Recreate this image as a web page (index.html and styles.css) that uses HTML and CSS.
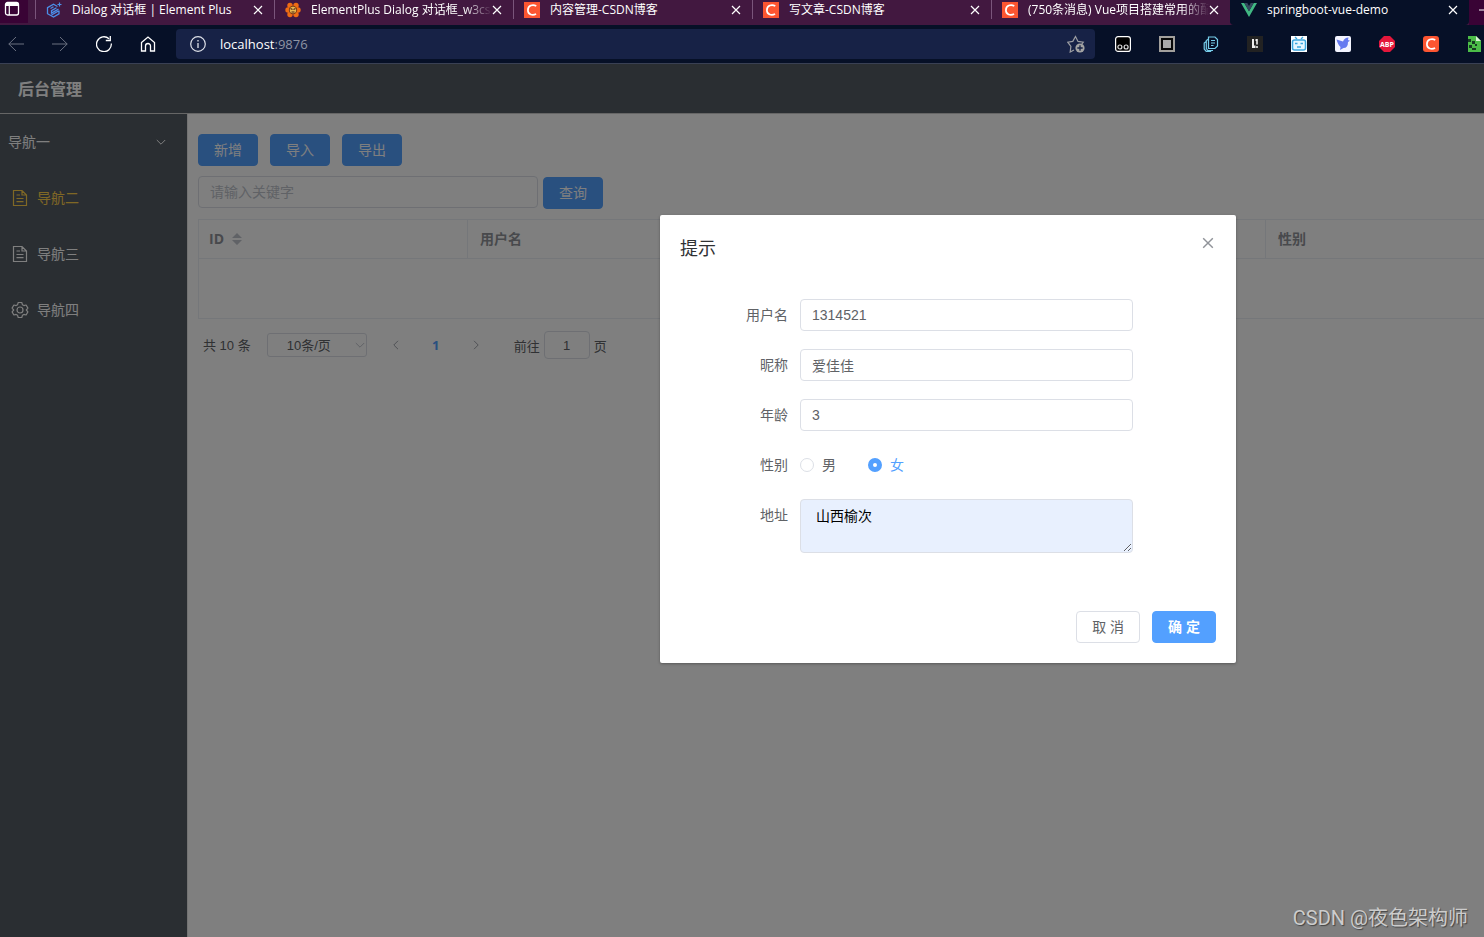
FILE: index.html
```html
<!DOCTYPE html>
<html lang="zh-CN">
<head>
<meta charset="utf-8">
<title>springboot-vue-demo</title>
<link rel="stylesheet" href="styles.css">
</head>
<body>
<svg class="defs" aria-hidden="true">
  <symbol id="x" viewBox="0 0 10 10"><path d="M1 1l8 8M9 1L1 9" fill="none" stroke="currentColor" stroke-width="1.200"/></symbol>
  <symbol id="csdn" viewBox="0 0 16 16"><rect width="16" height="16" fill="#fc5531"/><path d="M12.300 3.900C8.800 2.200 3.900 3.200 3.900 8.200c0 4.700 4.800 5.600 8.200 3.900" fill="none" stroke="#fff" stroke-width="1.700"/></symbol>
  <symbol id="down" viewBox="0 0 10 10"><path d="M.8 3L5 7.200 9.200 3" fill="none" stroke="currentColor"/></symbol>
  <symbol id="doc" viewBox="0 0 18 18"><path d="M2.500 1.500h8.500l4.500 4.500v10.500h-13zM11 1.500V6h4.500M5.500 6H9M5.500 9.500h7M5.500 12.700h7" fill="none" stroke="currentColor" stroke-width="1.200"/></symbol>
</svg>
<div class="browser">
  <div class="tabs">
    <button class="tab-menu" aria-label="标签页"><svg width="16" height="16" viewBox="0 0 16 16"><rect x="1.500" y="1.500" width="13" height="12.500" rx="2" fill="none" stroke="#fff" stroke-width="1.300"/><path d="M5.300 5v9" stroke="#fff" stroke-width="1.200"/><path d="M2 3.500h12" stroke="#fff" stroke-width="3"/></svg></button>
    <div class="tab"><svg class="fav" viewBox="0 0 16 16"><path d="M11.500 4.500L7.500 2.300 1.500 5.700v6l6 3.300 5.500-3.200V8.500M10.500 5.800l-5 2.900v2.400l7-4M7.500 4.800L4.500 6.500M5.500 13l7-4" fill="none" stroke="#4b8fe8" stroke-width="1.300"/><path d="M13.500 .5v4M11.500 2.500h4" stroke="#4b8fe8" stroke-width="1.200"/></svg><span class="tab-title">Dialog 对话框 | Element Plus</span><button class="tab-x" aria-label="关闭"><svg><use href="#x"/></svg></button></div>
    <div class="tab"><svg class="fav" viewBox="0 0 16 16"><g fill="#ef6c13"><circle cx="5" cy="3.500" r="2.700"/><circle cx="11" cy="3.500" r="2.700"/><circle cx="3" cy="8" r="2.700"/><circle cx="13" cy="8" r="2.700"/><circle cx="5" cy="12.500" r="2.700"/><circle cx="11" cy="12.500" r="2.700"/></g><circle cx="8" cy="8" r="4.200" fill="#7a3a14"/><circle cx="8" cy="8" r="3.200" fill="#e8b84e"/><path d="M5.500 6.500l2 1M10.500 6.500l-2 1M6.500 10h3" stroke="#492019" stroke-width="1.200"/></svg><span class="tab-title fade">ElementPlus Dialog 对话框_w3cs</span><button class="tab-x" aria-label="关闭"><svg><use href="#x"/></svg></button></div>
    <div class="tab"><svg class="fav"><use href="#csdn"/></svg><span class="tab-title">内容管理-CSDN博客</span><button class="tab-x" aria-label="关闭"><svg><use href="#x"/></svg></button></div>
    <div class="tab"><svg class="fav"><use href="#csdn"/></svg><span class="tab-title">写文章-CSDN博客</span><button class="tab-x" aria-label="关闭"><svg><use href="#x"/></svg></button></div>
    <div class="tab"><svg class="fav"><use href="#csdn"/></svg><span class="tab-title fade">(750条消息) Vue项目搭建常用的配</span><button class="tab-x" aria-label="关闭"><svg><use href="#x"/></svg></button></div>
    <div class="tab active"><svg class="fav" viewBox="0 0 16 16"><path d="M0 1h3.300L8 9.300 12.700 1H16L8 15z" fill="#41b883"/><path d="M3.300 1h3L8 4l1.700-3h3L8 9.300z" fill="#35495e"/></svg><span class="tab-title">springboot-vue-demo</span><button class="tab-x" aria-label="关闭"><svg><use href="#x"/></svg></button></div>
    <button class="new-tab" aria-label="新建标签页"><svg width="12" height="12" viewBox="0 0 12 12"><path d="M0 6h12M6 0v12" stroke="#fff"/></svg></button>
  </div>
  <div class="toolbar">
    <div class="nav-buttons">
      <button class="dim" aria-label="后退"><svg viewBox="0 0 16 16"><path d="M16 8H.800M8 1L.800 8 8 15"/></svg></button>
      <button class="dim" aria-label="前进"><svg viewBox="0 0 16 16"><path d="M0 8h15.200M8 1l7.200 7L8 15"/></svg></button>
      <button aria-label="刷新"><svg viewBox="0 0 16 16"><path d="M15.300 7.500A7.400 7.400 0 1 1 13 2.800M14.300 0v4.500H9.800" stroke-width="1.300"/></svg></button>
      <button aria-label="主页"><svg viewBox="0 0 16 16"><path d="M1.500 6.500L8 1l6.500 5.500V15H10.500V10a2.500 2.500 0 0 0-5 0v5h-4z" stroke-width="1.300"/></svg></button>
    </div>
    <div class="address">
      <svg width="16" height="16" viewBox="0 0 16 16"><circle cx="8" cy="8" r="7.300" fill="none" stroke="#dfe2ea" stroke-width="1.200"/><path d="M8 7v5M8 4v1.500" stroke="#dfe2ea" stroke-width="1.300"/></svg>
      <span class="url">localhost<span>:9876</span></span>
      <svg width="18" height="18" viewBox="0 0 18 18"><path d="M7 15l-3.800 2 .7-5.600L.8 7.200l5-.8L8.500 1.500l2.500 4.900 5.300.8-1.500 2" fill="none" stroke="#9c9da2" stroke-width="1.200"/><circle cx="13" cy="13" r="4.600" fill="#a3a3a3"/><path d="M13 10.300v5.400M10.300 13h5.400" stroke="#172246" stroke-width="1.300"/></svg>
    </div>
    <div class="extensions">
      <svg viewBox="0 0 16 16"><rect x=".6" y=".6" width="14.800" height="14.800" rx="2.500" fill="#000" stroke="#fff" stroke-width="1.200"/><g fill="none" stroke="#ddd" stroke-width="1.200"><circle cx="4.900" cy="11" r="2"/><circle cx="11.100" cy="11" r="2"/></g></svg>
      <svg viewBox="0 0 16 16"><rect width="16" height="16" fill="#a2a09c"/><rect x="2" y="2" width="12" height="12" fill="#080808"/><rect x="4" y="4" width="8" height="8" fill="#aaa"/></svg>
      <svg viewBox="0 0 16 16"><path d="M5.500 1H12l2.500 2.500V10L12 12.500H5.500zM5.500 3L3.300 4.500v8l1.500 2H10M3.300 5.500L1.200 7v6l2 2.300h5M8 4.500h4M8 7h4M8 9.500h2.500" fill="none" stroke="#77cdea" stroke-width="1.200"/></svg>
      <svg viewBox="0 0 16 16"><rect width="16" height="16" fill="#222"/><path d="M5 3h2v6.500h1.500V12H5zM8.500 3h2.300v5.500H9.200V5H8.500zM9.200 10h1.600v2H9.200z" fill="#eee"/></svg>
      <svg viewBox="0 0 16 16"><rect width="16" height="16" fill="#fff"/><rect x="1.500" y="4" width="13" height="10" rx="2" fill="#e5f6ff" stroke="#3ba6de" stroke-width="1.500"/><path d="M4 1l2 2M12 1l-2 2M4 7.500h2.500M9.500 7.500H12M6 11h4" stroke="#3ba6de" stroke-width="1.300"/></svg>
      <svg viewBox="0 0 16 16"><rect width="16" height="16" rx="2" fill="#f3f4ff"/><path d="M1.500 3.500l6.500 2C9 3 11 1.500 13.500 1.500L13 4l2 .8-2 1.200c0 4-1.500 6-4.500 6L5 14l.5-3C3.800 9.500 2.500 7 1.500 3.500z" fill="#657af0"/></svg>
      <svg viewBox="0 0 16 16"><path d="M5 0h6l5 5v6l-5 5H5l-5-5V5z" fill="#e4173b"/><text x="8" y="11" text-anchor="middle" class="abp">ABP</text></svg>
      <svg class="round" viewBox="0 0 16 16"><use href="#csdn"/></svg>
      <svg viewBox="0 0 16 16"><path d="M1 0h8l5 5v11H1z" fill="#4bbd48"/><path d="M9 0v5h5z" fill="#d6f2d3"/><path d="M1 3h3v3H1zM5 5h3v3H5zM2 9h3v3H2zM5 12h4v2H5zM8 8h2v2H8z" fill="#173d23"/></svg>
    </div>
  </div>
</div>

<div class="app">
  <header class="header">后台管理</header>
  <div class="layout">
    <nav class="sidebar">
      <a href="#" class="group"><span>导航一</span><svg><use href="#down"/></svg></a>
      <a href="#" class="current"><svg><use href="#doc"/></svg><span>导航二</span></a>
      <a href="#"><svg><use href="#doc"/></svg><span>导航三</span></a>
      <a href="#"><svg viewBox="0 0 18 18"><path d="M7.200 1.500h3.600l.6 2.200 1.500.9 2.200-.6 1.800 3.100L15.300 9l1.600 1.900-1.800 3.100-2.200-.6-1.500.9-.6 2.200H7.200l-.6-2.200-1.500-.9-2.200.6-1.800-3.100L2.700 9 1.100 7.100 2.900 4l2.200.6 1.500-.9z" fill="none" stroke="currentColor" stroke-width="1.200" stroke-linejoin="round"/><circle cx="9" cy="9" r="3" fill="none" stroke="currentColor" stroke-width="1.200"/></svg><span>导航四</span></a>
    </nav>
    <main class="main">
      <div class="actions">
        <button class="btn primary">新增</button>
        <button class="btn primary">导入</button>
        <button class="btn primary">导出</button>
      </div>
      <div class="search">
        <input type="text" class="field" placeholder="请输入关键字" aria-label="关键字">
        <button class="btn primary">查询</button>
      </div>
      <table class="table">
        <colgroup><col class="c-id"><col class="c"><col class="c"><col class="c"><col></colgroup>
        <thead><tr><th>ID<svg class="sort" viewBox="0 0 10 12"><path d="M5 0l5 5H0zM0 7h10l-5 5z" fill="#c0c4cc"/></svg></th><th>用户名</th><th></th><th></th><th>性别</th></tr></thead>
        <tbody><tr><td colspan="5"></td></tr></tbody>
      </table>
      <div class="pager">
        <span>共 10 条</span>
        <div class="size"><select aria-label="每页条数"><option>10条/页</option></select><svg><use href="#down"/></svg></div>
        <div class="pages">
          <button aria-label="上一页"><svg class="prev"><use href="#down"/></svg></button>
          <button class="on">1</button>
          <button aria-label="下一页"><svg class="next"><use href="#down"/></svg></button>
        </div>
        <label class="jump">前往<input type="text" value="1">页</label>
      </div>
    </main>
  </div>

  <div class="overlay">
    <form class="dialog" role="dialog" aria-labelledby="dialog-title">
      <div class="dialog-head"><h2 id="dialog-title">提示</h2><button type="button" aria-label="关闭"><svg><use href="#x"/></svg></button></div>
      <div class="dialog-body">
        <div class="row"><label for="username">用户名</label><div class="control"><input id="username" class="field" type="text" value="1314521"></div></div>
        <div class="row"><label for="nick">昵称</label><div class="control"><input id="nick" class="field" type="text" value="爱佳佳"></div></div>
        <div class="row"><label for="age">年龄</label><div class="control"><input id="age" class="field" type="text" value="3"></div></div>
        <div class="row"><span class="row-label" id="sex">性别</span><div class="control radios" role="radiogroup" aria-labelledby="sex"><label><input type="radio" name="sex"><span>男</span></label><label><input type="radio" name="sex" checked><span>女</span></label></div></div>
        <div class="row"><label for="address">地址</label><div class="control"><textarea id="address" class="field" rows="2">山西榆次</textarea></div></div>
      </div>
      <div class="dialog-foot"><button type="button" class="btn">取 消</button><button type="button" class="btn primary strong">确 定</button></div>
    </form>
  </div>
  <div class="watermark">CSDN @夜色架构师</div>
</div>
</body>
</html>
```
FILE: styles.css
```css
* { box-sizing: border-box; }
html, body { height: 100%; }
body {
  margin: 0;
  display: flex;
  flex-direction: column;
  overflow: hidden;
  font: 14px "Liberation Sans", "Noto Sans CJK SC", sans-serif;
  color: #606266;
}
button, input, select, textarea { font: inherit; color: inherit; margin: 0; }
button { border: 0; padding: 0; background: none; }
svg { display: block; flex: none; }
.defs { position: absolute; width: 0; height: 0; }

/* Browser frame */
.browser {
  flex: none;
  background: #061027;
  border-bottom: 1px solid #394054;
  color: #fff;
  font-family: "Open Sans", "Noto Sans CJK SC", sans-serif;
}
.tabs {
  display: flex;
  height: 25px;
  overflow: hidden;
  background: #421840;
}
.tab-menu { flex: none; width: 28px; height: 23px; margin-right: 7px; padding: 0 4px 5px; background: #390335; }
.tab {
  flex: 0 0 239px;
  min-width: 0;
  display: flex;
  align-items: center;
  height: 19px;
  padding: 0 11px 0 10px;
  border-left: 1px solid #7a557b;
  font-size: 12px;
}
.tab.active { height: 25px; padding-bottom: 6px; background: #061027; border-color: #061027; border-radius: 0 0 4px 4px; }
.fav { width: 16px; height: 16px; }
.tab-title {
  flex: 1;
  min-width: 0;
  margin-left: 10px;
  line-height: 18px;
  white-space: nowrap;
}
.fade { mask-image: linear-gradient(to right, #000 calc(100% - 28px), transparent); }
.tab-x svg { width: 10px; height: 10px; }
.new-tab { flex: none; padding: 0 10px 6px; background: #390335; }
.toolbar { display: flex; align-items: center; height: 38px; overflow: hidden; }
.nav-buttons { display: flex; gap: 28px; margin: 0 20px 0 8px; }
.nav-buttons svg { width: 16px; height: 16px; fill: none; stroke: #fff; }
.nav-buttons .dim svg { stroke: #6b7180; }
.address {
  flex: 1;
  display: flex;
  align-items: center;
  height: 30px;
  padding: 0 10px 0 14px;
  background: #172246;
  border-radius: 4px;
}
.url { flex: 1; margin-left: 14px; font-size: 13px; }
.url span { color: #8f94a3; }
.extensions { flex: none; display: flex; gap: 28px; width: 389px; padding-left: 20px; }
.extensions svg { width: 16px; height: 16px; }
.extensions .round { border-radius: 3px; }
.abp { font: bold 7px "Open Sans", sans-serif; fill: #fff; }

/* Admin page */
.app { position: relative; flex: 1; display: flex; flex-direction: column; overflow: hidden; background: #fff; }
.header {
  height: 50px;
  padding-left: 18px;
  line-height: 51px;
  font-size: 16px;
  font-weight: bold;
  color: #fff;
  background: #545c64;
  border-bottom: 1px solid #ccc;
}
.layout { flex: 1; display: flex; }
.sidebar { flex: none; width: 188px; background: #545c64; border-right: 1px solid #e6e6e6; }
.sidebar a {
  display: flex;
  align-items: center;
  gap: 8px;
  height: 56px;
  padding-left: 11px;
  color: #fff;
  text-decoration: none;
}
.sidebar span, .radios span { padding-bottom: 2px; }
.sidebar a svg { width: 18px; height: 18px; }
.sidebar .group { justify-content: space-between; padding: 0 21px 0 8px; }
.sidebar .group svg { width: 10px; height: 10px; }
.sidebar .current { color: #ffd04b; }
.main { flex: 1; min-width: 0; padding: 20px 0 0 10px; }
.btn {
  height: 32px;
  padding: 0 15px 2px;
  border: 1px solid #dcdfe6;
  border-radius: 4px;
  background: #fff;
}
.btn.primary { color: #fff; background: #53a0ff; border-color: #53a0ff; }
.btn.strong { font-weight: bold; }
.field {
  display: block;
  width: 80%;
  height: 32px;
  padding: 0 11px;
  border: 1px solid #dcdfe6;
  border-radius: 4px;
  background: #fff;
}
.field::placeholder { color: #c0c4cc; }
.actions { display: flex; gap: 12px; }
.search { display: flex; gap: 5px; height: 33px; margin: 10px 0; }
.search .field { width: 340px; }
.search .btn { align-self: flex-end; }
.table {
  width: 100%;
  table-layout: fixed;
  border-collapse: separate;
  border-spacing: 0;
  border: solid #ebeef5;
  border-width: 1px 0 0 1px;
  color: #909399;
}
.c-id { width: 269px; }
.c { width: 266px; }
.table th {
  height: 39px;
  padding: 0 10px;
  text-align: left;
  line-height: 20px;
  font-family: "Open Sans", "Noto Sans CJK SC", sans-serif;
  border: solid #ebeef5;
  border-width: 0 1px 1px 0;
}
.table th + th { padding-left: 12px; }
.table th:last-child { border-right: 0; }
.table td { height: 60px; border-bottom: 1px solid #ebeef5; }
.sort { display: inline-block; width: 10px; height: 12px; margin-left: 8px; vertical-align: -1px; }
.pager { display: flex; align-items: center; padding: 12px 5px 0; font-size: 13px; }
.pager > span { padding-bottom: 2px; }
.size { position: relative; margin-left: 16px; }
.size select {
  width: 100px;
  height: 24px;
  padding: 0 19px;
  appearance: none;
  border: 1px solid #dcdfe6;
  border-radius: 3px;
  background: #fff;
}
.size svg { position: absolute; right: 2px; top: 7px; width: 10px; height: 10px; color: #c0c4cc; }
.pages { display: flex; margin-left: 14px; }
.pages button { width: 30px; height: 28px; margin-right: 10px; color: #a0a4ac; }
.pages .on { color: #53a0ff; font-family: "Open Sans", sans-serif; font-weight: bold; }
.pages svg { width: 10px; height: 10px; margin: auto; }
.prev { transform: rotate(90deg); }
.next { transform: rotate(-90deg); }
.jump { display: flex; align-items: center; gap: 4px; margin-left: 13px; }
.jump input { width: 46px; height: 28px; text-align: center; border: 1px solid #dcdfe6; border-radius: 4px; }

/* Dialog */
.overlay { position: absolute; inset: 0; background: rgba(0, 0, 0, .5); }
.dialog {
  width: 576px;
  margin: 151px 0 0 660px;
  background: #fff;
  border-radius: 2px;
  box-shadow: 0 1px 3px rgba(0, 0, 0, .3);
}
.dialog-head { display: flex; justify-content: space-between; padding: 20px 20px 6px; }
.dialog-head h2 { margin: 0; font-size: 18px; line-height: 28px; font-weight: normal; color: #303133; }
.dialog-head button { height: 16px; padding: 0 2px; color: #909399; }
.dialog-head svg { width: 12px; height: 12px; }
.dialog-body { padding: 30px 20px; }
.row { display: flex; margin-bottom: 18px; }
.row > label, .row-label { width: 120px; padding-right: 12px; text-align: right; line-height: 32px; }
.control { flex: 1; }
.dialog textarea {
  height: 54px;
  padding: 5px 15px;
  line-height: 22px;
  color: #000;
  background: #e8f0fe;
  resize: vertical;
}
.radios { display: flex; gap: 32px; height: 32px; }
.radios label { display: flex; align-items: center; gap: 8px; }
.radios input {
  appearance: none;
  width: 14px;
  height: 14px;
  border: 1px solid #dcdfe6;
  border-radius: 50%;
  background: #fff;
}
.radios input:checked { border: 5px solid #53a0ff; }
.radios input:checked + span { color: #53a0ff; }
.dialog-foot { display: flex; justify-content: flex-end; gap: 12px; padding: 10px 20px 20px; }
.watermark {
  position: absolute;
  right: 16px;
  bottom: 4px;
  font: 20px/30px Roboto, "Noto Sans CJK SC", sans-serif;
  color: #ccc;
  text-shadow: 1px 1px 1px #444;
}
```
